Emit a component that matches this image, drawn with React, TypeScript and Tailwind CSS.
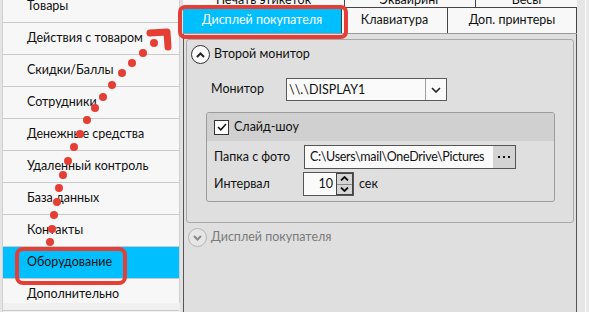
import React from 'react';

const FONT = { fontFamily: 'Lato, "Noto Sans", sans-serif' };

const menuItems = [
  'Товары',
  'Действия с товаром',
  'Скидки/Баллы',
  'Сотрудники',
  'Денежные средства',
  'Удаленный контроль',
  'База данных',
  'Контакты',
  'Оборудование',
  'Дополнительно',
];

const dots: [number, number][] = [
  [154, 43], [143, 53], [132, 63], [122, 73], [112, 85], [103, 97], [95, 108],
  [87, 120], [80, 134], [74, 147], [68, 161], [63, 175], [59, 188], [57, 202],
  [54, 215], [52, 229], [50, 242],
];

function ChevronCircle({ up, muted }: { up?: boolean; muted?: boolean }) {
  return (
    <div
      className={`w-[19px] h-[19px] rounded-full border flex items-center justify-center ${
        muted ? 'border-[#b4b4b4] bg-[#e6e6e6]' : 'border-[#333] bg-[#fafafa]'
      }`}
    >
      <svg width="9" height="6" viewBox="0 0 9 6">
        <path
          d={up ? 'M1 5 L4.5 1.5 L8 5' : 'M1 1 L4.5 4.5 L8 1'}
          fill="none"
          stroke={muted ? '#8a8a8a' : '#222'}
          strokeWidth="2"
        />
      </svg>
    </div>
  );
}

export default function App() {
  return (
    <div
      className="relative w-[589px] h-[312px] overflow-hidden flex bg-[#f0f0f0] text-[12.5px] text-[#111]"
      style={FONT}
    >
      {/* left edge of another window */}
      <div className="w-[3px] h-full bg-[#e4e4e4] border-r border-[#d0d0d0]" />

      {/* settings menu */}
      <div className="w-[177px] h-full bg-[#f7f7f7] border-r border-[#cfcfcf] flex flex-col mt-[-9px]">
        {menuItems.map((item) => (
          <div
            key={item}
            className={`h-[32px] shrink-0 flex items-center pl-[24px] border-b border-[#c9c9c9] ${
              item === 'Оборудование' ? 'bg-[#00bfff]' : ''
            }`}
          >
            {item}
          </div>
        ))}
      </div>

      <div className="w-[3px] h-full bg-[#e2e2e2]" />

      {/* main panel */}
      <div className="w-[394px] h-full flex flex-col bg-[#dfdfdf]">
        {/* tabs row 1 (cut) */}
        <div className="flex h-[20px] mt-[-12px] shrink-0 bg-[#f8f8f8] border-b border-[#444] leading-[15px]">
          <div className="w-[162px] flex items-end justify-center border-r border-[#444]">Печать этикеток</div>
          <div className="w-[131px] flex items-end justify-center border-r border-[#444]">Эквайринг</div>
          <div className="flex-1 flex items-end justify-center">Весы</div>
        </div>
        {/* tabs row 2 */}
        <div className="flex h-[26px] shrink-0 bg-[#f8f8f8] border-b border-[#999]">
          <div className="w-[159px] flex items-center justify-center bg-[#00bfff] text-white border-r border-[#444]">
            Дисплей покупателя
          </div>
          <div className="w-[106px] flex items-center justify-center border-r border-[#444]">Клавиатура</div>
          <div className="flex-1 flex items-center justify-center border-r border-[#444]">Доп. принтеры</div>
        </div>

        {/* content */}
        <div className="flex-1 border-l border-r border-[#555] pl-[2px] pr-[2px] pt-[5px]">
          <div className="h-[184px] border border-[#a9a9a9] rounded-[3px] pl-[4px] pr-[3px] pt-[5px]">
            <div className="flex items-center gap-[4px]">
              <ChevronCircle up />
              <span>Второй монитор</span>
            </div>

            <div className="flex items-center mt-[14px] pl-[20px]">
              <span className="w-[75px]">Монитор</span>
              <div className="w-[161px] h-[23px] bg-[#fafafa] border border-[#5a5a5a] flex">
                <span className="flex-1 pl-[2px] leading-[21px]">{'\\\\.\\DISPLAY1'}</span>
                <div className="w-[21px] border-l border-[#a0a0a0] flex items-center justify-center">
                  <svg width="10" height="6" viewBox="0 0 10 6">
                    <path d="M1 1 L5 5 L9 1" fill="none" stroke="#222" strokeWidth="1.6" />
                  </svg>
                </div>
              </div>
            </div>

            {/* slideshow group */}
            <div className="ml-[15px] mr-[15px] mt-[11px] h-[90px] border border-[#9c9c9c] rounded-[3px] overflow-hidden">
              <div className="h-[28px] bg-[#d0d0d0] flex items-center pl-[7px] gap-[5px]">
                <div className="w-[15px] h-[15px] bg-white border border-[#333] flex items-center justify-center">
                  <svg width="10" height="8" viewBox="0 0 10 8">
                    <path d="M1 4 L3.8 6.8 L9 1" fill="none" stroke="#111" strokeWidth="1.5" />
                  </svg>
                </div>
                <span>Слайд-шоу</span>
              </div>
              <div className="flex items-center mt-[4px] pl-[7px]">
                <span className="w-[90px]">Папка с фото</span>
                <div className="w-[212px] h-[24px] bg-[#fafafa] border border-[#555] flex">
                  <span className="flex-1 pl-[5px] leading-[22px] whitespace-nowrap overflow-hidden tracking-[-0.3px]">
                    {'C:\\Users\\mail\\OneDrive\\Pictures'}
                  </span>
                  <div className="w-[22px] shrink-0 bg-[#d3d3d3] flex items-center justify-center gap-[3px]">
                    <div className="w-[2px] h-[2px] bg-[#111]" />
                    <div className="w-[2px] h-[2px] bg-[#111]" />
                    <div className="w-[2px] h-[2px] bg-[#111]" />
                  </div>
                </div>
              </div>
              <div className="flex items-center mt-[3px] pl-[7px]">
                <span className="w-[89px]">Интервал</span>
                <div className="w-[51px] h-[24px] bg-[#fafafa] border border-[#555] flex">
                  <span className="flex-1 text-right pr-[3px] leading-[22px]">10</span>
                  <div className="w-[17px] border border-[#444] bg-[#d6d6d6] flex flex-col">
                    <div className="flex-1 flex items-center justify-center border-b border-[#888]">
                      <svg width="9" height="5" viewBox="0 0 9 5">
                        <path d="M1 4.5 L4.5 1 L8 4.5" fill="none" stroke="#111" strokeWidth="1.8" />
                      </svg>
                    </div>
                    <div className="flex-1 flex items-center justify-center">
                      <svg width="9" height="5" viewBox="0 0 9 5">
                        <path d="M1 0.5 L4.5 4 L8 0.5" fill="none" stroke="#111" strokeWidth="1.8" />
                      </svg>
                    </div>
                  </div>
                </div>
                <span className="ml-[5px]">сек</span>
              </div>
            </div>
          </div>

          <div className="flex items-center gap-[4px] mt-[5px] pl-[2px] text-[#7a7a7a]">
            <ChevronCircle muted />
            <span>Дисплей покупателя</span>
          </div>
        </div>
      </div>

      {/* right strip */}
      <div className="flex-1 h-full bg-[#e6e6e6] flex">
        <div className="w-[8px] h-full" />
        <div className="flex-1 h-full border-l border-[#fafafa] bg-[#e9e9e9]" />
      </div>

      {/* annotation overlay */}
      <svg className="absolute inset-0 pointer-events-none" width="589" height="312" viewBox="0 0 589 312">
        <rect x="180" y="7" width="166" height="30" rx="5" fill="none" stroke="#e53e35" strokeWidth="4" />
        <rect x="17" y="249" width="108" height="34" rx="6" fill="none" stroke="#e53e35" strokeWidth="4" />
        {dots.map(([x, y], i) => (
          <circle key={i} cx={x} cy={y} r="4" fill="#e53e35" />
        ))}
        <path
          d="M150 33 L167 32 L168 47"
          fill="none"
          stroke="#e53e35"
          strokeWidth="7"
          strokeLinecap="round"
          strokeLinejoin="round"
        />
      </svg>
    </div>
  );
}
